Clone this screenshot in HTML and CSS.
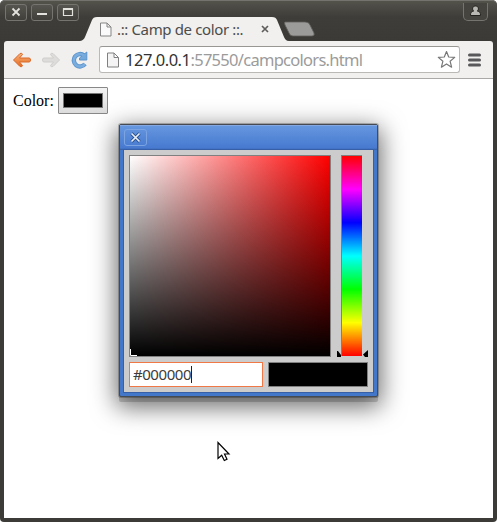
FILE: index.html
```html
<!DOCTYPE html>
<html lang="ca">
<head>
<meta charset="utf-8">
<title>.:: Camp de color ::.</title>
<link rel="stylesheet" href="styles.css">
</head>
<body>
<div class="window">
  <header class="titlebar">
    <div class="controls">
      <span class="control"><svg width="22" height="16" viewBox="0 0 22 16"><path d="M7.500 4.500l7 7m0-7l-7 7" stroke="#e4e2dd" stroke-width="1.800"/></svg></span>
      <span class="control"><svg width="22" height="16" viewBox="0 0 22 16"><path d="M6 10h10" stroke="#e4e2dd" stroke-width="2"/></svg></span>
      <span class="control"><svg width="22" height="16" viewBox="0 0 22 16"><path d="M6.500 5h9v6.500h-9z" fill="none" stroke="#e4e2dd" stroke-width="1.200"/><path d="M6 5h10" stroke="#e4e2dd" stroke-width="2"/></svg></span>
    </div>
    <span class="user"><svg width="25" height="18" viewBox="0 0 25 18"><path d="M12.500 3c3.500 0 3.500 4 1.800 5 2.500.5 3.200 1.500 3.200 4.500h-10c0-3 .7-4 3.200-4.500-1.700-1-1.700-5 1.800-5z" fill="#b9b7b1" stroke="#22211e"/></svg></span>
    <svg class="tab-shape" width="236" height="26" viewBox="0 0 236 26">
      <path d="M0 25c3-.5 4-2 5-4L12 4c1-2 2-3 5-3h175c3 0 4 1 5 3l7 17c1 2 2 4 5 4v1H0z" fill="#f1f0ee"/>
      <path d="M205 6h20q4 0 5 3l4 8q1 3-2 3h-19q-3 0-4-3l-4-8q-1-3 0-3z" fill="#9b9b99" stroke="#5f5e5a" stroke-width=".8"/>
    </svg>
    <div class="tab-content">
      <svg width="12" height="15" viewBox="0 0 12 15"><path d="M.5 1h6.500l4 4v9H.5zM7 1v4h4" fill="#fafafa" stroke="#858585"/></svg>
      <span class="tab-title">.:: Camp de color ::.</span>
      <svg class="tab-close" width="8" height="8" viewBox="0 0 8 8"><path d="M1 1l6 6m0-6L1 7" stroke="#5d5d5d" stroke-width="1.700"/></svg>
    </div>
  </header>
  <nav class="toolbar">
    <svg class="arrow" width="20" height="18" viewBox="0 0 20 18"><defs><linearGradient id="o" x2="0" y2="1"><stop stop-color="#f8b27a"/><stop offset="1" stop-color="#e56a20"/></linearGradient></defs><path d="M1.500 9l6.500-6.500q2-1 2.500 1L7.500 7H17q1.500 0 1.500 2T17 11H7.500l3 3.500q-.5 2-2.500 1z" fill="url(#o)" stroke="#d9692b"/></svg>
    <svg class="arrow" width="20" height="18" viewBox="0 0 20 18"><path d="M18.500 9L12 2.500q-2-1-2.500 1l3 3.500H3q-1.500 0-1.500 2T3 11h9.500l-3 3.500q.5 2 2.500 1z" fill="#dddcda" stroke="#cfcecb"/></svg>
    <svg class="reload" width="17" height="18" viewBox="0 0 17 18"><path d="M14 13a6.200 6.200 0 1 1-1-8.500" fill="none" stroke="#5b94cd" stroke-width="4.400"/><path d="M15.800 1v8H8.500v-2z" fill="#75a9dc" stroke="#5b94cd" stroke-linejoin="round"/><path d="M14 13a6.200 6.200 0 1 1-1-8.500" fill="none" stroke="#7badde" stroke-width="2.600"/></svg>
    <div class="address">
      <svg width="12" height="16" viewBox="0 0 12 16"><path d="M.5 1h6.500l4.500 4.500V15H.5zM7 1v4.500h4.500" fill="#f4f4f4" stroke="#808080"/></svg>
      <span class="url"><b>127.0.0.1</b>:57550/campcolors.html</span>
      <svg class="star" width="19" height="19" viewBox="0 0 19 19"><path d="M9.500 1.500l2.200 5.500 6 .4-4.600 3.800 1.500 6-5.100-3.300-5.100 3.300 1.500-6L1.300 7.400l6-.4z" fill="#fff" stroke="#777" stroke-width="1.200" stroke-linejoin="round"/></svg>
    </div>
    <svg class="menu" width="13" height="14" viewBox="0 0 13 14"><path d="M1.500 2h10m-10 5h10m-10 5h10" stroke="#58585a" stroke-width="3" stroke-linecap="round"/></svg>
  </nav>
  <main class="page">
    <label class="field">Color: <span class="color-button"><i></i></span></label>
  </main>
</div>
<section class="picker">
  <div class="picker-title"><span class="picker-close"><svg width="21" height="15" viewBox="0 0 21 15"><path d="M6.500 3.500l8 8m0-8l-8 8" stroke="#26508f" stroke-width="3.200"/><path d="M6.500 3.500l8 8m0-8l-8 8" stroke="#e9eef7" stroke-width="1.700"/></svg></span></div>
  <div class="picker-body">
    <div class="fields">
      <div class="shade"><svg width="7" height="7" viewBox="0 0 7 7"><path d="M.5 0v6.500H7" fill="none" stroke="#fff"/></svg></div>
      <svg class="pointer" width="4" height="6" viewBox="0 0 4 6"><path d="M0 0h1l3 4v2H0z"/></svg>
      <div class="hue"></div>
      <svg class="pointer right" width="5" height="7" viewBox="0 0 5 7"><path d="M5 0v7H2L0 4.500z"/></svg>
    </div>
    <div class="values">
      <div class="hex">#000000<i class="caret"></i></div>
      <div class="sample"></div>
    </div>
  </div>
</section>
<svg class="cursor" width="14" height="21" viewBox="0 0 14 21"><path d="M1 1.500v16l3.700-3.300 2.600 5.300 2.700-1.300-2.500-5.200h4.500z" fill="#fff" stroke="#000" stroke-width="1.200"/></svg>
</body>
</html>
```
FILE: styles.css
```css
* { box-sizing: border-box; }
body { margin: 0; width: 497px; height: 522px; overflow: hidden; background: #fff; position: relative; }
svg { display: block; flex: none; }
.window {
  height: 522px;
  padding: 0 4px 4px;
  background: #3c3b37;
  border-radius: 5px 5px 4px 4px;
  display: flex;
  flex-direction: column;
}
.titlebar {
  height: 41px;
  flex: none;
  margin: 0 -4px;
  padding: 3px 9px 0 5px;
  display: flex;
  justify-content: space-between;
  align-items: flex-start;
  position: relative;
  border-top: 1px solid #74736e;
  border-radius: 5px 5px 0 0;
  background: linear-gradient(#53524b, #3e3d39 16px, #3b3a36);
}
.controls { display: flex; gap: 4px; }
.control {
  width: 22px;
  height: 17px;
  border: 1px solid #75746e;
  border-radius: 3px;
  background: linear-gradient(#56554e, #403f3a);
}
.control svg { margin: -1px; }
.user {
  width: 25px;
  height: 18px;
  margin-top: -1px;
  border: 1px solid #75746e;
  border-top: 0;
  border-radius: 0 0 5px 5px;
  background: #45443f;
}
.user svg { margin-left: -1px; }
.tab-shape { position: absolute; left: 80px; bottom: -1px; }
.tab-content {
  position: absolute;
  left: 100px;
  top: 18px;
  height: 20px;
  width: 172px;
  display: flex;
  align-items: center;
}
.tab-title {
  margin-left: 5px;
  width: 144px;
  white-space: nowrap;
  font: 15px/20px "Noto Sans", sans-serif;
  letter-spacing: -.37px;
  color: #4c4c4c;
}
.toolbar {
  height: 38px;
  flex: none;
  display: flex;
  align-items: center;
  background: #f1f0ee;
  border-bottom: 1px solid #aaa9a7;
  border-radius: 3px 3px 0 0;
  padding-left: 8px;
}
.arrow { margin-right: 9px; }
.reload { margin: 0 10px 0 1px; }
.address {
  width: 361px;
  height: 27px;
  margin-left: 1px;
  border: 1px solid #bbb9b5;
  border-top-color: #999793;
  border-radius: 3px;
  background: #fff;
  display: flex;
  align-items: center;
  padding: 0 3px 0 7px;
}
.url {
  margin-left: 6px;
  flex: 1;
  white-space: nowrap;
  font: 16.5px/24px "Noto Sans", sans-serif;
  letter-spacing: -.72px;
  color: #9b9b9b;
}
.url b { font-weight: 400; letter-spacing: -.49px; color: #333; }
.menu { margin-left: 8px; }
.page { flex: 1; background: #fff; padding: 8px 9px; }
.field { display: flex; align-items: center; gap: 4px; font: 16px/18px "Liberation Serif", serif; color: #000; }
.color-button {
  width: 50px;
  height: 27px;
  padding: 5px 4px;
  border: 1px solid #888;
  border-radius: 1px;
  background: linear-gradient(#f3f3f3, #dcdcdc);
}
.color-button i { display: block; height: 15px; border: 1px solid #777; background: #000; }
.picker {
  position: absolute;
  left: 119px;
  top: 124px;
  width: 259px;
  height: 273px;
  padding: 0 4px 4px;
  border: 1px solid #454b53;
  border-radius: 2px;
  background: #4377c9;
  box-shadow: 0 0 0 1px rgba(0,0,0,.22), 0 5px 0 0 rgba(0,0,0,.16), 0 7px 25px 3px rgba(0,0,0,.58);
}
.picker-title {
  height: 25px;
  margin: 0 -4px;
  padding: 3px 4px;
  border-top: 1px solid #84a9e2;
  background: linear-gradient(#6596df, #477ad0 22px, #335c9f);
}
.picker-close { display: block; width: 23px; height: 17px; border: 1px solid #7ca4e2; border-radius: 3px; }
.picker-body {
  height: 242px;
  padding: 5px;
  background: #ccc;
  box-shadow: 0 0 0 1px #365fa8;
  display: flex;
  flex-direction: column;
  gap: 5px;
}
.fields { display: flex; height: 202px; align-items: flex-end; }
.shade {
  width: 202px;
  height: 202px;
  border: 1px solid #808080;
  background: linear-gradient(transparent, #000), linear-gradient(to right, #fff, #f00);
  display: flex;
  align-items: flex-end;
}
.pointer { margin: 0 0 0 6px; }
.pointer.right { margin: 0 0 0 1px; }
.hue {
  width: 21px;
  height: 201px;
  margin-bottom: 1px;
  border: solid #808080;
  border-width: 1px 0 0 1px;
  background: linear-gradient(#f00, #f0f, #00f, #0ff, #0f0, #ff0, #f00);
}
.values { display: flex; gap: 5px; height: 25px; }
.hex {
  width: 134px;
  border: 1px solid #f07746;
  background: #fff;
  padding-left: 3px;
  display: flex;
  align-items: center;
  font: 15px/23px "Noto Sans", sans-serif;
  letter-spacing: -.45px;
  color: #3c3c3c;
}
.caret { width: 1px; height: 17px; background: #222; }
.sample { width: 100px; border: 1px solid #808080; background: #000; }
.cursor { position: absolute; left: 217px; top: 441px; }
```
